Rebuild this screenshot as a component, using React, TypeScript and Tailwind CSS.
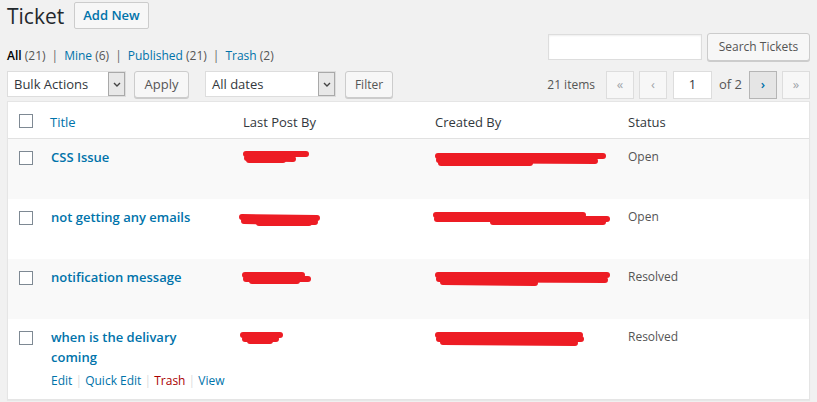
import React from 'react';

type Mark = { w: number; h: number; cls: string; paths: string[] };

type Row = {
  title: string[];
  status: string;
  bg: string;
  actions?: boolean;
  last: Mark;
  created: Mark;
};

const rows: Row[] = [
  {
    title: ['CSS Issue'],
    status: 'Open',
    bg: 'bg-[#f9f9f9]',
    last: { w: 66, h: 13, cls: 'mt-[11px] ml-0', paths: ['M3 4 L63 4', 'M4 8 L50 9', 'M6 10 L40 10'] },
    created: { w: 172, h: 15, cls: 'mt-[13px] ml-0', paths: ['M3 4 L168 4', 'M4 8 L160 9', 'M6 11 L95 11'] },
  },
  {
    title: ['not getting any emails'],
    status: 'Open',
    bg: 'bg-white',
    last: { w: 82, h: 13, cls: 'mt-[14px] ml-[-4px]', paths: ['M3 4 L78 5', 'M5 8 L76 9', 'M20 10 L70 10'] },
    created: { w: 178, h: 15, cls: 'mt-[12px] ml-[-2px]', paths: ['M3 4 L150 4', 'M4 8 L174 8', 'M60 11 L170 11'] },
  },
  {
    title: ['notification message'],
    status: 'Resolved',
    bg: 'bg-[#f9f9f9]',
    last: { w: 70, h: 13, cls: 'mt-[12px] ml-[-1px]', paths: ['M3 4 L60 4', 'M4 8 L66 8', 'M10 10 L55 10'] },
    created: { w: 176, h: 16, cls: 'mt-[12px] ml-0', paths: ['M3 4 L172 4', 'M4 8 L170 9', 'M8 11 L100 12'] },
  },
  {
    title: ['when is the delivary', 'coming'],
    status: 'Resolved',
    bg: 'bg-white',
    actions: true,
    last: { w: 44, h: 13, cls: 'mt-[12px] ml-[-3px]', paths: ['M3 4 L40 4', 'M5 8 L36 8', 'M10 10 L30 10'] },
    created: { w: 150, h: 16, cls: 'mt-[12px] ml-0', paths: ['M3 4 L145 4', 'M4 8 L146 8', 'M8 11 L140 12'] },
  },
];

function Scribble({ w, h, cls, paths }: Mark) {
  return (
    <svg width={w} height={h} viewBox={`0 0 ${w} ${h}`} className={`block ${cls}`}>
      {paths.map((d, i) => (
        <path key={i} d={d} stroke="#ed1c24" strokeWidth={6} strokeLinecap="round" fill="none" />
      ))}
    </svg>
  );
}

function Checkbox() {
  return <span className="block w-[14px] h-[14px] border border-[#7e8993] bg-white" />;
}

function Chevron() {
  return (
    <svg width="8" height="5" viewBox="0 0 8 5">
      <path d="M1 1 L4 4 L7 1" stroke="#444" strokeWidth="1.4" fill="none" />
    </svg>
  );
}

function Select({ label, w }: { label: string; w: string }) {
  return (
    <div className={`${w} h-[26px] flex items-stretch border border-[#ddd] bg-white text-[13px]`}>
      <span className="flex-1 pl-[6px] leading-[24px] text-[#32373c]">{label}</span>
      <span className="w-[17px] flex items-center justify-center border border-[#a9a9a9] bg-[#e8e8e8]">
        <Chevron />
      </span>
    </div>
  );
}

function Button({ children, cls = '' }: { children: React.ReactNode; cls?: string }) {
  return (
    <span
      className={`inline-flex items-center justify-center h-[27px] px-[10px] border border-[#ccc] rounded-[3px] bg-[#f7f7f7] shadow-[0_1px_0_#ccc] text-[#555] ${cls}`}
    >
      {children}
    </span>
  );
}

export default function App() {
  return (
    <div className="w-[817px] h-[402px] overflow-hidden bg-[#f1f1f1] font-['Open_Sans',sans-serif] text-[12px] text-[#444] px-[7px]">
      {/* Heading */}
      <div className="flex items-center h-[31px]">
        <h1 className="text-[21px] leading-[28px] text-[#23282d] font-normal">Ticket</h1>
        <span className="ml-[10px] inline-flex items-center h-[27px] px-[8px] border border-[#ccc] rounded-[2px] bg-[#f7f7f7] text-[#0073aa] text-[13px] font-semibold">
          Add New
        </span>
      </div>

      {/* Views + search */}
      <div className="flex justify-between items-start h-[38px] pt-[2px]">
        <ul className="flex items-center mt-[14px] text-[#666]">
          <li>
            <span className="text-black font-semibold">All</span> <span className="text-[#555]">(21)</span>
            <span className="mx-[6px]">|</span>
          </li>
          <li>
            <span className="text-[#0073aa]">Mine</span> <span className="text-[#555]">(6)</span>
            <span className="mx-[6px]">|</span>
          </li>
          <li>
            <span className="text-[#0073aa]">Published</span> <span className="text-[#555]">(21)</span>
            <span className="mx-[6px]">|</span>
          </li>
          <li>
            <span className="text-[#0073aa]">Trash</span> <span className="text-[#555]">(2)</span>
          </li>
        </ul>
        <div className="flex items-center gap-[5px]">
          <span className="block w-[154px] h-[26px] border border-[#ddd] bg-white shadow-[inset_0_1px_2px_rgba(0,0,0,0.07)]" />
          <Button cls="w-[103px] h-[28px]">Search Tickets</Button>
        </div>
      </div>

      {/* Table nav */}
      <div className="flex items-start justify-between h-[32px] pt-[2px]">
        <div className="flex items-start">
          <Select label="Bulk Actions" w="w-[119px]" />
          <Button cls="ml-[8px] w-[55px] text-[13px]">Apply</Button>
          <Select label="All dates" w="ml-[16px] w-[131px]" />
          <Button cls="ml-[9px] w-[48px]">Filter</Button>
        </div>
        <div className="flex items-center gap-[5px] text-[#555]">
          <span className="mr-[6px]">21 items</span>
          <span className="w-[28px] h-[28px] flex items-center justify-center border border-[#ddd] bg-[#f7f7f7] text-[#a0a5aa] text-[13px]">«</span>
          <span className="w-[28px] h-[28px] flex items-center justify-center border border-[#ddd] bg-[#f7f7f7] text-[#a0a5aa] text-[13px]">‹</span>
          <span className="w-[39px] h-[28px] ml-[1px] flex items-center justify-center border border-[#ddd] bg-white text-[#32373c] text-[13px]">1</span>
          <span className="mx-[2px] text-[13px]">of 2</span>
          <span className="w-[28px] h-[28px] flex items-center justify-center border border-[#b5b5b5] bg-[#e5e5e5] text-[#0073aa] text-[13px] font-semibold">›</span>
          <span className="w-[28px] h-[28px] flex items-center justify-center border border-[#ddd] bg-[#f7f7f7] text-[#a0a5aa] text-[13px]">»</span>
        </div>
      </div>

      {/* Table */}
      <div className="border border-[#e5e5e5] bg-white shadow-[0_1px_1px_rgba(0,0,0,0.04)]">
        <div className="grid grid-cols-[42px_193px_192px_193px_1fr] h-[37px] items-start border-b border-[#e1e1e1] text-[13px] leading-[20px] text-[#32373c]">
          <div className="pl-[11px] pt-[12px]">
            <Checkbox />
          </div>
          <span className="pt-[10px] text-[#0073aa]">Title</span>
          <span className="pt-[10px]">Last Post By</span>
          <span className="pt-[10px]">Created By</span>
          <span className="pt-[10px]">Status</span>
        </div>
        {rows.map((r, i) => (
          <div key={i} className={`grid grid-cols-[42px_193px_192px_193px_1fr] ${r.bg} pb-[8px]`}>
            <div className="pl-[11px] pt-[12px]">
              <Checkbox />
            </div>
            <div className="pt-[8px] pl-[1px]">
              {r.title.map((t) => (
                <div key={t} className="text-[13px] leading-[20px] font-semibold text-[#0073aa]">
                  {t}
                </div>
              ))}
              <div className={`h-[24px] pt-[4px] leading-[20px] text-[#ddd] ${r.actions ? '' : 'invisible'}`}>
                <span className="text-[#0073aa]">Edit</span> | <span className="text-[#0073aa]">Quick Edit</span> |{' '}
                <span className="text-[#a00]">Trash</span> | <span className="text-[#0073aa]">View</span>
              </div>
            </div>
            <div>
              <Scribble {...r.last} />
            </div>
            <div>
              <Scribble {...r.created} />
            </div>
            <div className="pt-[8px] leading-[20px] text-[#555]">{r.status}</div>
          </div>
        ))}
      </div>
    </div>
  );
}
